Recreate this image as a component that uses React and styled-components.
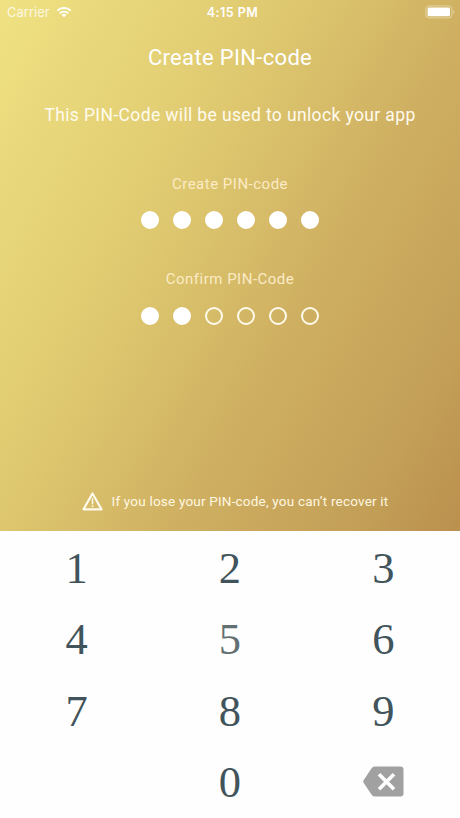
import React from "react";
import styled, { createGlobalStyle } from "styled-components";

const GlobalStyle = createGlobalStyle`
  *, *::before, *::after { box-sizing: border-box; }
  body { margin: 0; background: #fff; }
`;

const Screen = styled.div`
  display: flex;
  flex-direction: column;
  width: 460px;
  height: 818px;
  overflow: hidden;
  background: #fefefe;
  font-family: Roboto, sans-serif;
`;

const Hero = styled.main`
  display: flex;
  flex-direction: column;
  align-items: center;
  height: 531px;
  flex: none;
  color: #fff;
  background: linear-gradient(119.5deg, #f0e283 0%, #dfc970 37%, #cfb062 62%, #c39f57 86%, #ba904e 100%);
`;

const StatusBar = styled.header`
  display: grid;
  grid-template-columns: 1fr auto 1fr;
  align-items: center;
  width: 100%;
  height: 24px;
  padding: 0 5px 0 7px;
  font-family: Inter, sans-serif;
  font-size: 13px;
`;

const Carrier = styled.div`
  display: flex;
  align-items: center;
  gap: 6px;
  color: rgba(255, 255, 255, 0.78);
`;

const Clock = styled.div`
  font-weight: 600;
  font-size: 12.5px;
  letter-spacing: 0.5px;
  padding-left: 3px;
`;

const BatteryIcon = styled.svg`
  justify-self: end;
  display: block;
`;

const Title = styled.h1`
  margin: 20px 0 0;
  font-size: 22px;
  font-weight: 400;
  line-height: 28px;
  letter-spacing: 0.33px;
`;

const Subtitle = styled.p`
  margin: 31px 0 0;
  font-size: 17.5px;
  line-height: 24px;
  letter-spacing: 0.37px;
  white-space: nowrap;
  color: #fffbee;
`;

const PinGroup = styled.section`
  display: flex;
  flex-direction: column;
  align-items: center;
  gap: ${({ $gap }) => $gap}px;
  margin-top: ${({ $top }) => $top}px;
`;

const PinLabel = styled.div`
  font-size: 15px;
  line-height: 20px;
  letter-spacing: 0.5px;
  color: #fbebc4;
`;

const Dots = styled.div`
  display: flex;
  gap: 14px;
`;

const Dot = styled.span`
  width: 18px;
  height: 18px;
  border-radius: 50%;
  border: 2px solid #fffaea;
  ${({ $filled }) => $filled && "background: #fff; border-color: #fff;"}
`;

const Warning = styled.div`
  display: flex;
  align-items: center;
  gap: 9px;
  margin-top: auto;
  margin-bottom: 19px;
  padding-left: 10px;
  font-size: 13.5px;
  line-height: 22px;
  letter-spacing: 0.2px;
  white-space: nowrap;
  color: #fff7e0;
`;

const Keypad = styled.div`
  display: grid;
  grid-template-columns: repeat(3, 1fr);
  grid-template-rows: repeat(4, 1fr);
  flex: 1;
  padding-top: 1px;
`;

const Key = styled.button`
  display: flex;
  align-items: center;
  justify-content: center;
  padding: 0;
  border: 0;
  background: none;
  color: ${({ $pressed }) => ($pressed ? "#637072" : "#42545b")};
  font: 44.5px/1 "Liberation Serif", serif;
`;

const DeleteKey = styled(Key)`
  padding-bottom: 2px;
`;

const Blank = styled.span``;

function WifiIcon() {
  return (
    <svg width="16" height="12" viewBox="0 0 16 12" fill="none" stroke="#fff">
      <path d="M1.3 4.6a9.6 9.6 0 0 1 13.4 0" strokeWidth="2" />
      <path d="M3.8 7.3a6 6 0 0 1 8.4 0" strokeWidth="1.9" />
      <path d="M8 11.3 5.7 9a3.2 3.2 0 0 1 4.6 0z" fill="#fff" stroke="none" />
    </svg>
  );
}

function Battery() {
  return (
    <BatteryIcon width="30" height="14" viewBox="0 0 30 14">
      <rect x="0.9" y="0.9" width="26" height="12" rx="3.2" fill="none" stroke="#fff" strokeOpacity="0.42" />
      <rect x="2.6" y="2.6" width="22.4" height="8.6" rx="1.5" fill="#fff" />
      <path d="M28.2 5c1.5.5 1.5 3.5 0 4z" fill="#fff" fillOpacity="0.42" />
    </BatteryIcon>
  );
}

function WarningIcon() {
  return (
    <svg width="21" height="19" viewBox="0 0 21 19" fill="none" stroke="#fffaea" strokeLinejoin="round">
      <path d="M10.5 1.5 19.5 17.3H1.5z" strokeWidth="2.2" />
      <path d="M10.5 6.2v6M10.5 13.2v1.8" strokeWidth="1.5" />
    </svg>
  );
}

function BackspaceIcon() {
  return (
    <svg width="41" height="31" viewBox="0 0 41 31">
      <path d="M11.5 0.5H37.5A3 3 0 0 1 40.5 3.5V27.5A3 3 0 0 1 37.5 30.5H11.5Q9.7 30.5 8.6 28.8L0.6 16.7Q-0.1 15.5 0.6 14.3L8.6 2.2Q9.7 0.5 11.5 0.5Z" fill="#a1a1a1" />
      <path d="M16 8.2 31 23.2M31 8.2 16 23.2" stroke="#fff" strokeWidth="3.7" />
    </svg>
  );
}

function PinEntry({ label, filled, top, gap }) {
  return (
    <PinGroup $top={top} $gap={gap}>
      <PinLabel>{label}</PinLabel>
      <Dots>
        {Array.from({ length: 6 }, (_, i) => (
          <Dot key={i} $filled={i < filled} />
        ))}
      </Dots>
    </PinGroup>
  );
}

export default function App() {
  return (
    <Screen>
      <GlobalStyle />
      <Hero>
        <StatusBar>
          <Carrier>
            Carrier
            <WifiIcon />
          </Carrier>
          <Clock>4:15 PM</Clock>
          <Battery />
        </StatusBar>
        <Title>Create PIN-code</Title>
        <Subtitle>This PIN-Code will be used to unlock your app</Subtitle>
        <PinEntry label="Create PIN-code" filled={6} top={47} gap={17} />
        <PinEntry label="Confirm PIN-Code" filled={2} top={40} gap={18} />
        <Warning>
          <WarningIcon />
          <span>If you lose your PIN-code, you can’t recover it</span>
        </Warning>
      </Hero>
      <Keypad>
        {[1, 2, 3, 4, 5, 6, 7, 8, 9].map((n) => (
          <Key key={n} $pressed={n === 5}>{n}</Key>
        ))}
        <Blank />
        <Key>0</Key>
        <DeleteKey aria-label="Delete">
          <BackspaceIcon />
        </DeleteKey>
      </Keypad>
    </Screen>
  );
}
